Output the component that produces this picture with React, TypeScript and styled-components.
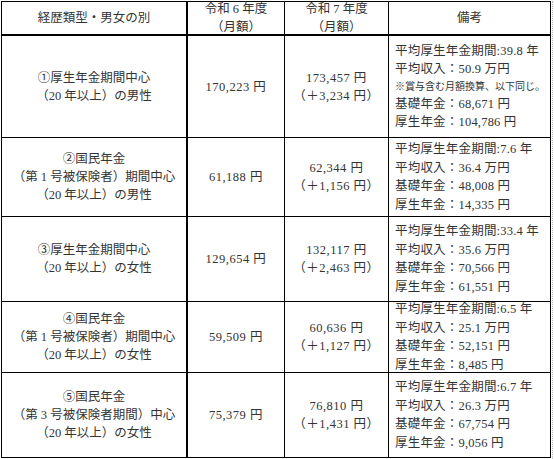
import React from "react";
import styled, { createGlobalStyle } from "styled-components";

const GlobalStyles = createGlobalStyle`
  html, body {
    margin: 0;
    padding: 0;
    background: #ffffff;
  }
  body {
    font-family: "Liberation Serif", "Noto Sans CJK JP", serif;
    color: #333333;
  }
`;

type Row = {
  label: string[];
  r6: string;
  r7: string;
  diff: string;
  notes: { text: string; small?: boolean }[];
  height: number;
};

const rows: Row[] = [
  {
    label: ["①厚生年金期間中心", "（20 年以上）の男性"],
    r6: "170,223 円",
    r7: "173,457 円",
    diff: "（＋3,234 円）",
    notes: [
      { text: "平均厚生年金期間:39.8 年" },
      { text: "平均収入：50.9 万円" },
      { text: "※賞与含む月額換算、以下同じ。", small: true },
      { text: "基礎年金：68,671 円" },
      { text: "厚生年金：104,786 円" }
    ],
    height: 102
  },
  {
    label: ["②国民年金", "（第 1 号被保険者）期間中心", "（20 年以上）の男性"],
    r6: "61,188 円",
    r7: "62,344 円",
    diff: "（＋1,156 円）",
    notes: [
      { text: "平均厚生年金期間:7.6 年" },
      { text: "平均収入：36.4 万円" },
      { text: "基礎年金：48,008 円" },
      { text: "厚生年金：14,335 円" }
    ],
    height: 79
  },
  {
    label: ["③厚生年金期間中心", "（20 年以上）の女性"],
    r6: "129,654 円",
    r7: "132,117 円",
    diff: "（＋2,463 円）",
    notes: [
      { text: "平均厚生年金期間:33.4 年" },
      { text: "平均収入：35.6 万円" },
      { text: "基礎年金：70,566 円" },
      { text: "厚生年金：61,551 円" }
    ],
    height: 85
  },
  {
    label: ["④国民年金", "（第 1 号被保険者）期間中心", "（20 年以上）の女性"],
    r6: "59,509 円",
    r7: "60,636 円",
    diff: "（＋1,127 円）",
    notes: [
      { text: "平均厚生年金期間:6.5 年" },
      { text: "平均収入：25.1 万円" },
      { text: "基礎年金：52,151 円" },
      { text: "厚生年金：8,485 円" }
    ],
    height: 71
  },
  {
    label: ["⑤国民年金", "（第 3 号被保険者期間）中心", "（20 年以上）の女性"],
    r6: "75,379 円",
    r7: "76,810 円",
    diff: "（＋1,431 円）",
    notes: [
      { text: "平均厚生年金期間:6.7 年" },
      { text: "平均収入：26.3 万円" },
      { text: "基礎年金：67,754 円" },
      { text: "厚生年金：9,056 円" }
    ],
    height: 85
  }
];

const App = () => (
  <>
    <GlobalStyles />
    <Page>
      <Table rowHeights={[34, ...rows.map((r) => r.height)]}>
        <Cell thickRight thickBottom>
          <Line>経歴類型・男女の別</Line>
        </Cell>
        <Cell thickBottom>
          <Line>令和 6 年度</Line>
          <Line>（月額）</Line>
        </Cell>
        <Cell thickBottom>
          <Line>令和 7 年度</Line>
          <Line>（月額）</Line>
        </Cell>
        <Cell thickBottom>
          <Line>備考</Line>
        </Cell>

        {rows.map((row, i) => (
          <React.Fragment key={i}>
            <Cell thickRight>
              {row.label.map((l) => (
                <Line key={l}>{l}</Line>
              ))}
            </Cell>
            <AmountCell>
              <Line>{row.r6}</Line>
            </AmountCell>
            <AmountCell>
              <Line>{row.r7}</Line>
              <Line>{row.diff}</Line>
            </AmountCell>
            <NoteCell>
              {row.notes.map((n) => (
                <NoteLine key={n.text} small={n.small}>
                  {n.text}
                </NoteLine>
              ))}
            </NoteCell>
          </React.Fragment>
        ))}
      </Table>
      <DottedEdge />
    </Page>
  </>
);
export default App;

const Page = styled.div({
  display: "flex",
  alignItems: "stretch",
  height: "459px",
  padding: "1px 0 0 1px",
  boxSizing: "border-box"
});

const Table = styled.div<{ rowHeights: number[] }>`
  display: grid;
  grid-template-columns: 186px 97px 104px 162px;
  grid-template-rows: ${(p) => p.rowHeights.map((h) => `${h}px`).join(" ")};
  align-self: flex-start;
  border-top: 1px solid #000;
  border-left: 1px solid #000;
`;

const Cell = styled.div<{ thickRight?: boolean; thickBottom?: boolean }>`
  box-sizing: border-box;
  display: flex;
  flex-direction: column;
  align-items: center;
  justify-content: center;
  border-right: ${(p) => (p.thickRight ? 2 : 1)}px solid #000;
  border-bottom: ${(p) => (p.thickBottom ? 2 : 1)}px solid #000;
  font-size: 12.5px;
  line-height: 18px;
  text-align: center;
  white-space: nowrap;
`;

const AmountCell = styled(Cell)`
  letter-spacing: 0.5px;
`;

const Line = styled.div({});

const NoteCell = styled(Cell)`
  align-items: flex-start;
  padding-left: 6px;
  text-align: left;
`;

const NoteLine = styled.div<{ small?: boolean }>`
  font-size: ${(p) => (p.small ? "10px" : "12.5px")};
  line-height: ${(p) => (p.small ? "16px" : "18.5px")};
  letter-spacing: ${(p) => (p.small ? "0" : "0.2px")};
`;

const DottedEdge = styled.div({
  marginLeft: "1px",
  width: 0,
  borderLeft: "1px dotted #b8b8b8"
});
